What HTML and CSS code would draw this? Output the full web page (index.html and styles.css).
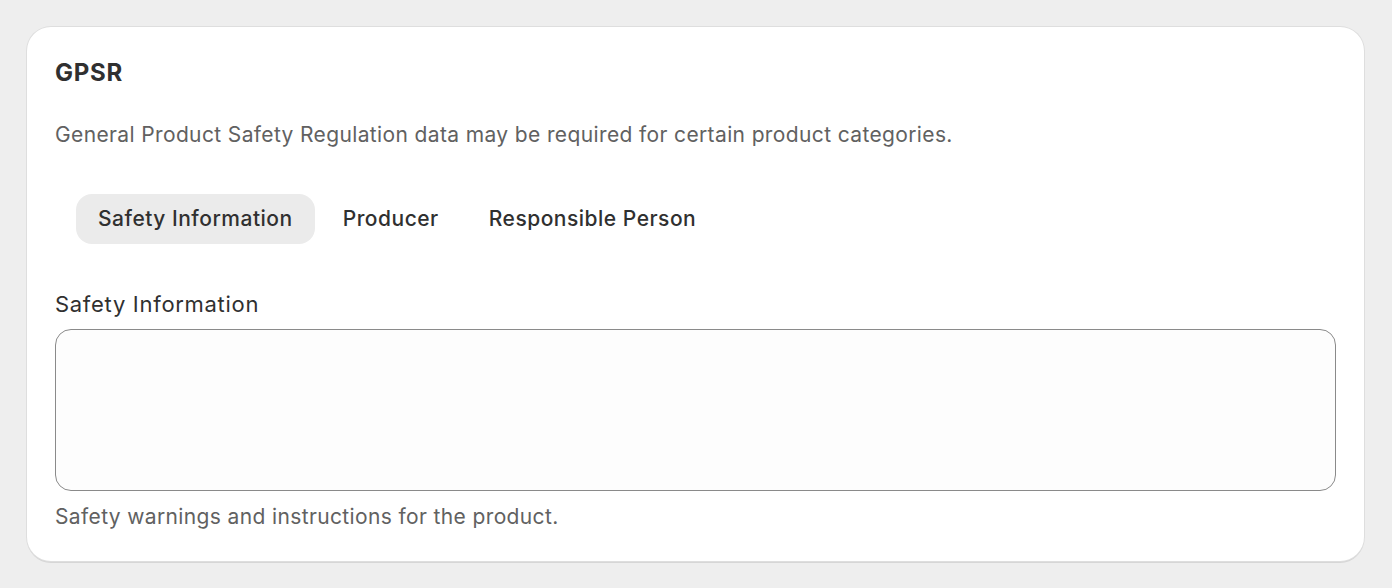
FILE: index.html
```html
<!DOCTYPE html>
<html lang="en">
<head>
<meta charset="utf-8">
<title>GPSR</title>
<link rel="stylesheet" href="styles.css">
</head>
<body>
<section class="card">
  <h2 class="card-title">GPSR</h2>
  <p class="card-desc">General Product Safety Regulation data may be required for certain product categories.</p>
  <div class="tabs">
    <button class="tab tab-active">Safety Information</button>
    <button class="tab">Producer</button>
    <button class="tab">Responsible Person</button>
  </div>
  <div class="field">
    <label class="field-label" for="safety">Safety Information</label>
    <textarea id="safety" class="field-input"></textarea>
    <p class="field-help">Safety warnings and instructions for the product.</p>
  </div>
</section>
</body>
</html>
```
FILE: styles.css
```css
html, body {
  margin: 0;
  padding: 0;
}
body {
  background: #eeeeee;
  font-family: Inter, "Noto Sans", sans-serif;
  color: #303030;
  padding: 27px 28px 27px 27px;
}
.card {
  background: #ffffff;
  border-radius: 24px;
  box-shadow: 0 0 0 1px #dedede, 0 2px 0 0 #d6d6d6;
  padding: 30px 28px 28px 28px;
  height: 534px;
  box-sizing: border-box;
}
.card-title {
  margin: 0;
  font-size: 24px;
  line-height: 32px;
  font-weight: 650;
  letter-spacing: 0.75px;
  color: #303030;
}
.card-desc {
  margin: 32px 0 0 0;
  font-size: 21px;
  line-height: 28px;
  letter-spacing: 0.37px;
  color: #616161;
}
.tabs {
  display: flex;
  gap: 6px;
  margin: 45px 0 0 21px;
}
.tab {
  font-family: inherit;
  font-size: 21px;
  font-weight: 550;
  letter-spacing: 0.5px;
  color: #303030;
  background: transparent;
  border: none;
  border-radius: 16px;
  padding: 0 22px;
  height: 50px;
  line-height: 50px;
}
.tab-active {
  background: #ebebeb;
}
.field {
  margin-top: 46px;
  display: flex;
  flex-direction: column;
}
.field-label {
  font-size: 22px;
  line-height: 28px;
  letter-spacing: 0.7px;
  color: #303030;
}
.field-input {
  margin-top: 11px;
  height: 162px;
  box-sizing: border-box;
  border: 1px solid #8a8a8a;
  border-radius: 16px;
  background: #fdfdfd;
  resize: none;
  font-family: inherit;
}
.field-help {
  margin: 12px 0 0 0;
  font-size: 21px;
  line-height: 28px;
  letter-spacing: 0.37px;
  color: #616161;
}
```
